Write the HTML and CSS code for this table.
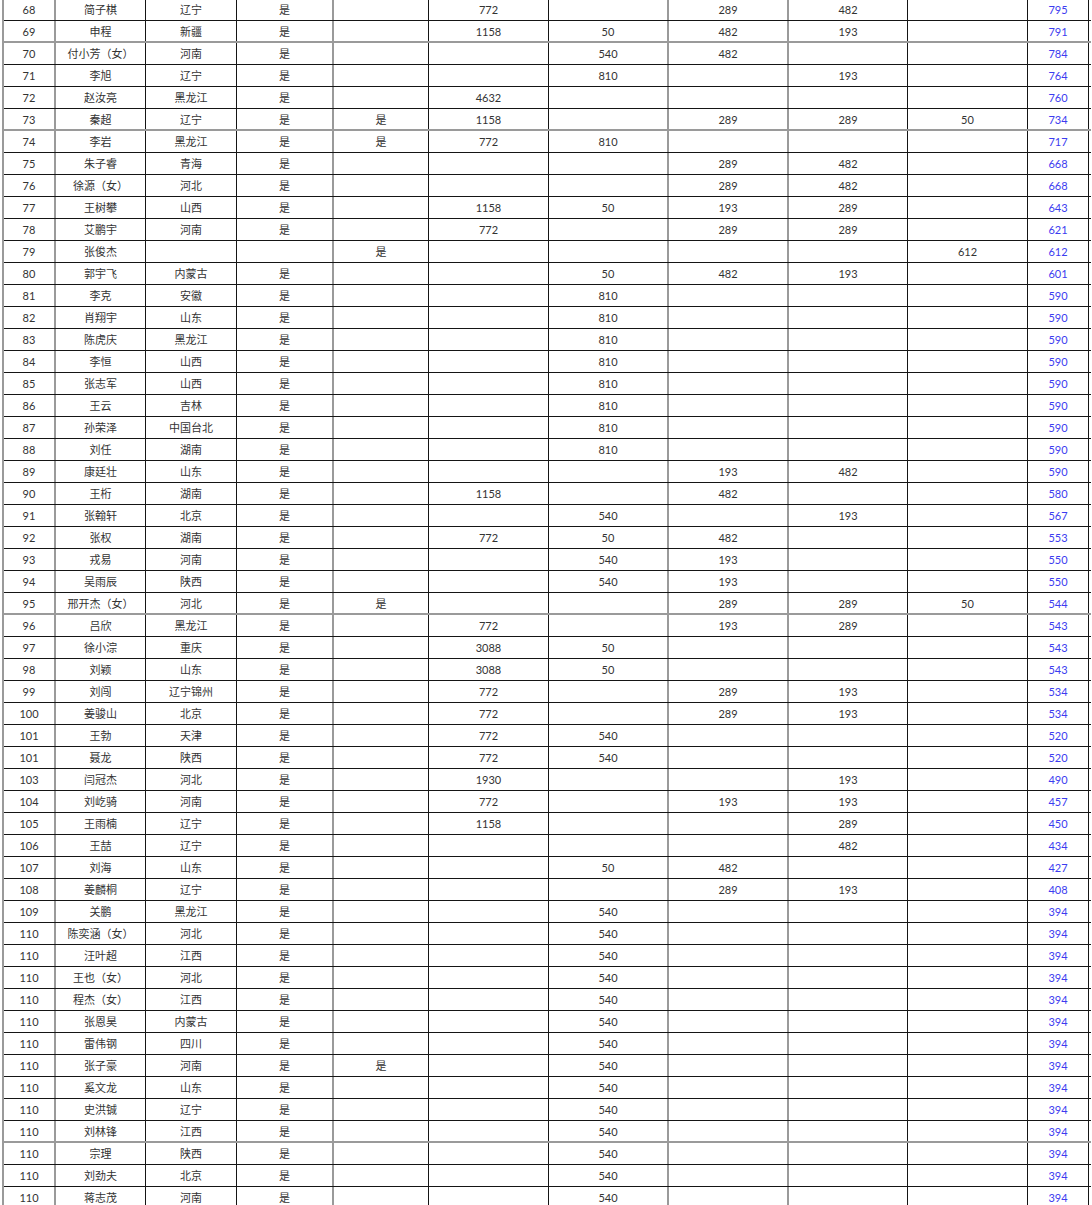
FILE: index.html
```html
<!DOCTYPE html>
<html lang="zh-CN">
<head>
<meta charset="utf-8">
<title>成绩表</title>
<link rel="stylesheet" href="styles.css">
</head>
<body>
<div class="sheet">
<div class="row"><div>68</div><div>简子棋</div><div>辽宁</div><div>是</div><div></div><div>772</div><div></div><div>289</div><div>482</div><div></div><div class="t">795</div></div>
<div class="row g"><div>69</div><div>申程</div><div>新疆</div><div>是</div><div></div><div>1158</div><div>50</div><div>482</div><div>193</div><div></div><div class="t">791</div></div>
<div class="row"><div>70</div><div>付小芳（女）</div><div>河南</div><div>是</div><div></div><div></div><div>540</div><div>482</div><div></div><div></div><div class="t">784</div></div>
<div class="row"><div>71</div><div>李旭</div><div>辽宁</div><div>是</div><div></div><div></div><div>810</div><div></div><div>193</div><div></div><div class="t">764</div></div>
<div class="row"><div>72</div><div>赵汝亮</div><div>黑龙江</div><div>是</div><div></div><div>4632</div><div></div><div></div><div></div><div></div><div class="t">760</div></div>
<div class="row g"><div>73</div><div>秦超</div><div>辽宁</div><div>是</div><div>是</div><div>1158</div><div></div><div>289</div><div>289</div><div>50</div><div class="t">734</div></div>
<div class="row"><div>74</div><div>李岩</div><div>黑龙江</div><div>是</div><div>是</div><div>772</div><div>810</div><div></div><div></div><div></div><div class="t">717</div></div>
<div class="row"><div>75</div><div>朱子睿</div><div>青海</div><div>是</div><div></div><div></div><div></div><div>289</div><div>482</div><div></div><div class="t">668</div></div>
<div class="row"><div>76</div><div>徐源（女）</div><div>河北</div><div>是</div><div></div><div></div><div></div><div>289</div><div>482</div><div></div><div class="t">668</div></div>
<div class="row"><div>77</div><div>王树攀</div><div>山西</div><div>是</div><div></div><div>1158</div><div>50</div><div>193</div><div>289</div><div></div><div class="t">643</div></div>
<div class="row"><div>78</div><div>艾鹏宇</div><div>河南</div><div>是</div><div></div><div>772</div><div></div><div>289</div><div>289</div><div></div><div class="t">621</div></div>
<div class="row"><div>79</div><div>张俊杰</div><div></div><div></div><div>是</div><div></div><div></div><div></div><div></div><div>612</div><div class="t">612</div></div>
<div class="row"><div>80</div><div>郭宇飞</div><div>内蒙古</div><div>是</div><div></div><div></div><div>50</div><div>482</div><div>193</div><div></div><div class="t">601</div></div>
<div class="row"><div>81</div><div>李克</div><div>安徽</div><div>是</div><div></div><div></div><div>810</div><div></div><div></div><div></div><div class="t">590</div></div>
<div class="row"><div>82</div><div>肖翔宇</div><div>山东</div><div>是</div><div></div><div></div><div>810</div><div></div><div></div><div></div><div class="t">590</div></div>
<div class="row"><div>83</div><div>陈虎庆</div><div>黑龙江</div><div>是</div><div></div><div></div><div>810</div><div></div><div></div><div></div><div class="t">590</div></div>
<div class="row"><div>84</div><div>李恒</div><div>山西</div><div>是</div><div></div><div></div><div>810</div><div></div><div></div><div></div><div class="t">590</div></div>
<div class="row"><div>85</div><div>张志军</div><div>山西</div><div>是</div><div></div><div></div><div>810</div><div></div><div></div><div></div><div class="t">590</div></div>
<div class="row"><div>86</div><div>王云</div><div>吉林</div><div>是</div><div></div><div></div><div>810</div><div></div><div></div><div></div><div class="t">590</div></div>
<div class="row"><div>87</div><div>孙荣泽</div><div>中国台北</div><div>是</div><div></div><div></div><div>810</div><div></div><div></div><div></div><div class="t">590</div></div>
<div class="row"><div>88</div><div>刘任</div><div>湖南</div><div>是</div><div></div><div></div><div>810</div><div></div><div></div><div></div><div class="t">590</div></div>
<div class="row"><div>89</div><div>康廷壮</div><div>山东</div><div>是</div><div></div><div></div><div></div><div>193</div><div>482</div><div></div><div class="t">590</div></div>
<div class="row"><div>90</div><div>王桁</div><div>湖南</div><div>是</div><div></div><div>1158</div><div></div><div>482</div><div></div><div></div><div class="t">580</div></div>
<div class="row"><div>91</div><div>张翰轩</div><div>北京</div><div>是</div><div></div><div></div><div>540</div><div></div><div>193</div><div></div><div class="t">567</div></div>
<div class="row"><div>92</div><div>张权</div><div>湖南</div><div>是</div><div></div><div>772</div><div>50</div><div>482</div><div></div><div></div><div class="t">553</div></div>
<div class="row"><div>93</div><div>戎易</div><div>河南</div><div>是</div><div></div><div></div><div>540</div><div>193</div><div></div><div></div><div class="t">550</div></div>
<div class="row"><div>94</div><div>吴雨辰</div><div>陕西</div><div>是</div><div></div><div></div><div>540</div><div>193</div><div></div><div></div><div class="t">550</div></div>
<div class="row g"><div>95</div><div>邢开杰（女）</div><div>河北</div><div>是</div><div>是</div><div></div><div></div><div>289</div><div>289</div><div>50</div><div class="t">544</div></div>
<div class="row"><div>96</div><div>吕欣</div><div>黑龙江</div><div>是</div><div></div><div>772</div><div></div><div>193</div><div>289</div><div></div><div class="t">543</div></div>
<div class="row"><div>97</div><div>徐小淙</div><div>重庆</div><div>是</div><div></div><div>3088</div><div>50</div><div></div><div></div><div></div><div class="t">543</div></div>
<div class="row"><div>98</div><div>刘颖</div><div>山东</div><div>是</div><div></div><div>3088</div><div>50</div><div></div><div></div><div></div><div class="t">543</div></div>
<div class="row"><div>99</div><div>刘闯</div><div>辽宁锦州</div><div>是</div><div></div><div>772</div><div></div><div>289</div><div>193</div><div></div><div class="t">534</div></div>
<div class="row"><div>100</div><div>姜骏山</div><div>北京</div><div>是</div><div></div><div>772</div><div></div><div>289</div><div>193</div><div></div><div class="t">534</div></div>
<div class="row"><div>101</div><div>王勃</div><div>天津</div><div>是</div><div></div><div>772</div><div>540</div><div></div><div></div><div></div><div class="t">520</div></div>
<div class="row"><div>101</div><div>聂龙</div><div>陕西</div><div>是</div><div></div><div>772</div><div>540</div><div></div><div></div><div></div><div class="t">520</div></div>
<div class="row"><div>103</div><div>闫冠杰</div><div>河北</div><div>是</div><div></div><div>1930</div><div></div><div></div><div>193</div><div></div><div class="t">490</div></div>
<div class="row"><div>104</div><div>刘屹骑</div><div>河南</div><div>是</div><div></div><div>772</div><div></div><div>193</div><div>193</div><div></div><div class="t">457</div></div>
<div class="row"><div>105</div><div>王雨楠</div><div>辽宁</div><div>是</div><div></div><div>1158</div><div></div><div></div><div>289</div><div></div><div class="t">450</div></div>
<div class="row"><div>106</div><div>王喆</div><div>辽宁</div><div>是</div><div></div><div></div><div></div><div></div><div>482</div><div></div><div class="t">434</div></div>
<div class="row"><div>107</div><div>刘海</div><div>山东</div><div>是</div><div></div><div></div><div>50</div><div>482</div><div></div><div></div><div class="t">427</div></div>
<div class="row"><div>108</div><div>姜麟桐</div><div>辽宁</div><div>是</div><div></div><div></div><div></div><div>289</div><div>193</div><div></div><div class="t">408</div></div>
<div class="row"><div>109</div><div>关鹏</div><div>黑龙江</div><div>是</div><div></div><div></div><div>540</div><div></div><div></div><div></div><div class="t">394</div></div>
<div class="row"><div>110</div><div>陈奕涵（女）</div><div>河北</div><div>是</div><div></div><div></div><div>540</div><div></div><div></div><div></div><div class="t">394</div></div>
<div class="row"><div>110</div><div>汪叶超</div><div>江西</div><div>是</div><div></div><div></div><div>540</div><div></div><div></div><div></div><div class="t">394</div></div>
<div class="row"><div>110</div><div>王也（女）</div><div>河北</div><div>是</div><div></div><div></div><div>540</div><div></div><div></div><div></div><div class="t">394</div></div>
<div class="row"><div>110</div><div>程杰（女）</div><div>江西</div><div>是</div><div></div><div></div><div>540</div><div></div><div></div><div></div><div class="t">394</div></div>
<div class="row"><div>110</div><div>张恩昊</div><div>内蒙古</div><div>是</div><div></div><div></div><div>540</div><div></div><div></div><div></div><div class="t">394</div></div>
<div class="row"><div>110</div><div>雷伟钢</div><div>四川</div><div>是</div><div></div><div></div><div>540</div><div></div><div></div><div></div><div class="t">394</div></div>
<div class="row"><div>110</div><div>张子豪</div><div>河南</div><div>是</div><div>是</div><div></div><div>540</div><div></div><div></div><div></div><div class="t">394</div></div>
<div class="row"><div>110</div><div>奚文龙</div><div>山东</div><div>是</div><div></div><div></div><div>540</div><div></div><div></div><div></div><div class="t">394</div></div>
<div class="row"><div>110</div><div>史洪铖</div><div>辽宁</div><div>是</div><div></div><div></div><div>540</div><div></div><div></div><div></div><div class="t">394</div></div>
<div class="row g"><div>110</div><div>刘林锋</div><div>江西</div><div>是</div><div></div><div></div><div>540</div><div></div><div></div><div></div><div class="t">394</div></div>
<div class="row"><div>110</div><div>宗理</div><div>陕西</div><div>是</div><div></div><div></div><div>540</div><div></div><div></div><div></div><div class="t">394</div></div>
<div class="row"><div>110</div><div>刘劲夫</div><div>北京</div><div>是</div><div></div><div></div><div>540</div><div></div><div></div><div></div><div class="t">394</div></div>
<div class="row"><div>110</div><div>蒋志茂</div><div>河南</div><div>是</div><div></div><div></div><div>540</div><div></div><div></div><div></div><div class="t">394</div></div>
</div>
</body>
</html>
```

FILE: styles.css
```css
html, body {
  margin: 0;
  padding: 0;
  background: #ffffff;
}

body {
  font-family: "Lato", "Noto Sans CJK SC", sans-serif;
  font-size: 11px;
  color: #333333;
  overflow: hidden;
}

.sheet {
  margin: -1px 0 0 2px;
  width: 1087px;
  border-left: 2px solid #9a9a9a;
}

.row {
  display: grid;
  grid-template-columns: 52px 90px 91px 97px 95px 120px 120px 120px 119px 120px 61px;
  height: 22px;
  box-sizing: border-box;
  border-bottom: 1px solid #151515;
}

.row.g {
  border-bottom: 2px solid #9a9a9a;
}

.row > div {
  box-sizing: border-box;
  border-right: 1px solid #151515;
  display: flex;
  align-items: center;
  justify-content: center;
  white-space: nowrap;
  line-height: 1;
}

.row > div:nth-child(1),
.row > div:nth-child(4),
.row > div:nth-child(7),
.row > div:nth-child(8) {
  border-right: 2px solid #9a9a9a;
}

.row > .t {
  color: #3c3cf0;
}
```
